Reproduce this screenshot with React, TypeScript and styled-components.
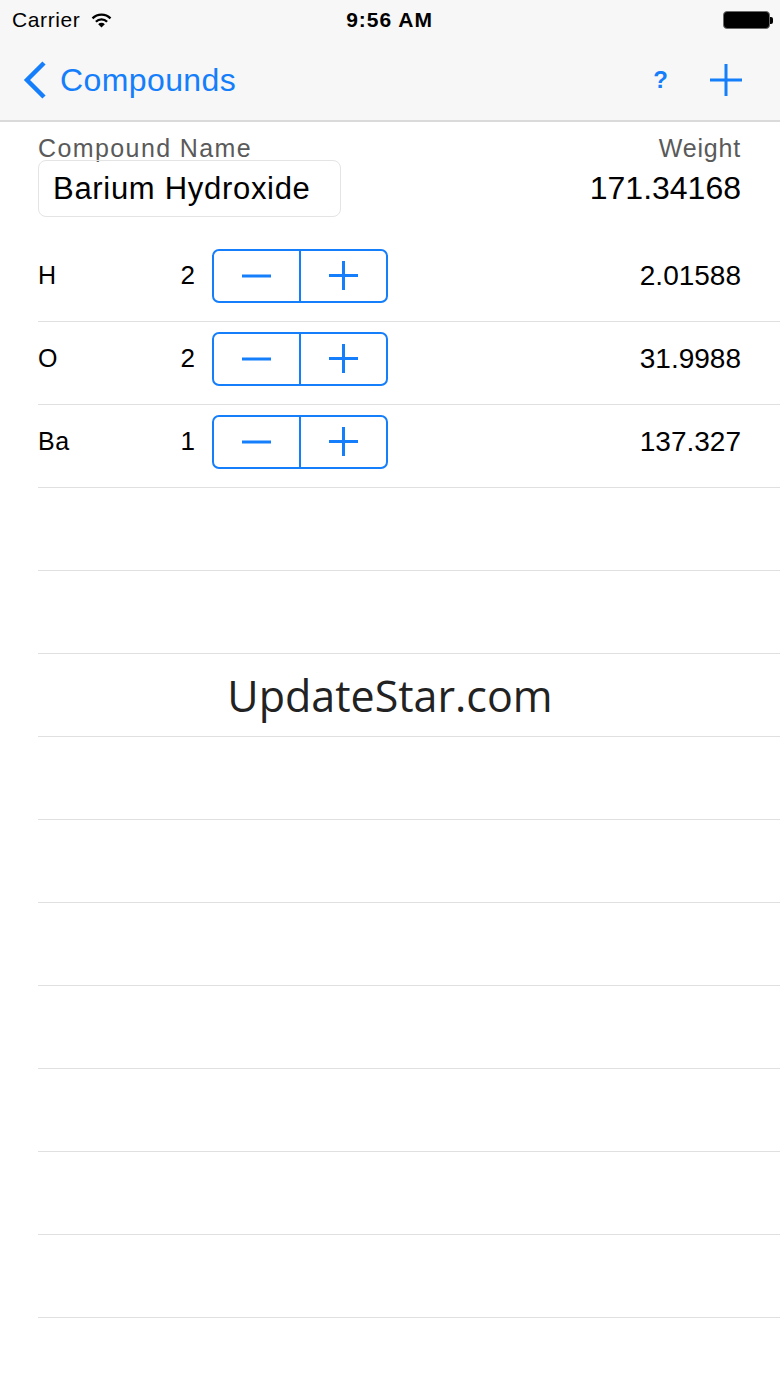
import styled, { createGlobalStyle } from 'styled-components'

const blue = '#157efb'

const GlobalStyle = createGlobalStyle`
  html, body {
    margin: 0;
    padding: 0;
    background: #ffffff;
  }
  body {
    font-family: 'Liberation Sans', Arial, sans-serif;
    color: #000000;
  }
  * {
    box-sizing: border-box;
  }
`

const Screen = styled.div`
  position: relative;
  width: 780px;
  height: 1387px;
  overflow: hidden;
  background: #ffffff;
`

const TopBar = styled.div`
  background: #f7f7f7;
  border-bottom: 2px solid #dadada;
`

const StatusBar = styled.div`
  height: 40px;
  display: grid;
  grid-template-columns: 1fr auto 1fr;
  align-items: center;
  padding: 0 7px 0 12px;
`

const Carrier = styled.div`
  display: flex;
  align-items: center;
  gap: 11px;
  font-size: 21px;
  letter-spacing: 0.6px;
`

const Clock = styled.div`
  font-weight: bold;
  font-size: 21px;
  letter-spacing: 1px;
  padding-right: 6px;
`

const Battery = styled.div`
  justify-self: end;
  display: flex;
  align-items: center;
`

const BatteryBody = styled.div`
  width: 47px;
  height: 18px;
  border-radius: 4px;
  background: #000000;
  border: 1.5px solid #6a6a6a;
`

const BatteryTip = styled.div`
  width: 3px;
  height: 7px;
  border-radius: 0 2px 2px 0;
  background: #000000;
`

const NavBar = styled.div`
  height: 80px;
  display: flex;
  align-items: center;
  padding: 0 38px 0 22px;
`

const BackButton = styled.div`
  display: flex;
  align-items: center;
  gap: 13px;
  color: ${blue};
  font-size: 32px;
  letter-spacing: 0.4px;
  flex: 1;
`

const NavActions = styled.div`
  display: flex;
  align-items: center;
  gap: 42px;
`

const HelpButton = styled.div`
  color: ${blue};
  font-size: 24px;
  font-weight: bold;
`

const Header = styled.div`
  height: 117px;
  padding: 13px 39px 0 38px;
  display: grid;
  grid-template-columns: auto 1fr;
  grid-template-rows: 25px 57px;
  align-content: start;
`

const FieldLabel = styled.div<{ $right?: boolean }>`
  font-size: 25px;
  letter-spacing: ${(p) => (p.$right ? '0.8px' : '1.4px')};
  color: #5a5a5a;
  text-align: ${(p) => (p.$right ? 'right' : 'left')};
  line-height: 26px;
`

const NameField = styled.div`
  width: 303px;
  height: 57px;
  border: 1px solid #e4e4e4;
  border-radius: 8px;
  display: flex;
  align-items: center;
  padding-left: 14px;
  font-size: 31px;
  letter-spacing: 0.7px;
`

const TotalWeight = styled.div`
  font-size: 32px;
  text-align: right;
  align-self: center;
`

const List = styled.div`
  display: flex;
  flex-direction: column;
`

const Row = styled.div`
  height: 83px;
  margin-left: 38px;
  padding: 0 39px 9px 0;
  border-bottom: 1px solid #e0e0e0;
  display: grid;
  grid-template-columns: 120px 37px 176px 1fr;
  align-items: center;
`

const Symbol = styled.div`
  font-size: 25px;
  letter-spacing: 0.5px;
`

const Count = styled.div`
  font-size: 26px;
  text-align: right;
`

const Stepper = styled.div`
  margin-left: 17px;
  width: 176px;
  height: 54px;
  border: 2px solid ${blue};
  border-radius: 7px;
  display: flex;
`

const StepButton = styled.div<{ $first?: boolean }>`
  flex: 1;
  display: flex;
  align-items: center;
  justify-content: center;
  border-right: ${(p) => (p.$first ? `2px solid ${blue}` : 'none')};
`

const Weight = styled.div`
  font-size: 28px;
  text-align: right;
`

const Watermark = styled.div`
  position: absolute;
  left: 0;
  right: 0;
  top: 666px;
  text-align: center;
  font-family: 'Open Sans', 'Noto Sans', sans-serif;
  font-size: 43px;
  color: #222222;
  pointer-events: none;
`

const WifiIcon = () => (
  <svg width="21" height="16" viewBox="0 0 21 16">
    <path d="M10.5 15.5 L7.2 12.2 A4.7 4.7 0 0 1 13.8 12.2 Z" fill="#000" />
    <path d="M4.9 9.8 A7.9 7.9 0 0 1 16.1 9.8" stroke="#000" strokeWidth="2.3" fill="none" />
    <path d="M1.5 6.4 A12.7 12.7 0 0 1 19.5 6.4" stroke="#000" strokeWidth="2.3" fill="none" />
  </svg>
)

const Chevron = () => (
  <svg width="25" height="40" viewBox="0 0 25 40">
    <path d="M22 3 L5 20 L22 37" stroke={blue} strokeWidth="4.5" fill="none" />
  </svg>
)

const PlusIcon = ({ size, weight }: { size: number; weight: number }) => (
  <svg width={size} height={size} viewBox={`0 0 ${size} ${size}`}>
    <path
      d={`M${size / 2} 0 V${size} M0 ${size / 2} H${size}`}
      stroke={blue}
      strokeWidth={weight}
    />
  </svg>
)

const MinusIcon = () => (
  <svg width="29" height="4" viewBox="0 0 29 4">
    <path d="M0 2 H29" stroke={blue} strokeWidth="3" />
  </svg>
)

const elements = [
  { symbol: 'H', count: 2, weight: '2.01588' },
  { symbol: 'O', count: 2, weight: '31.9988' },
  { symbol: 'Ba', count: 1, weight: '137.327' },
]

const App = () => {
  const emptyRows = Array.from({ length: 10 })

  return (
    <Screen>
      <GlobalStyle />
      <TopBar>
        <StatusBar>
          <Carrier>
            Carrier
            <WifiIcon />
          </Carrier>
          <Clock>9:56 AM</Clock>
          <Battery>
            <BatteryBody />
            <BatteryTip />
          </Battery>
        </StatusBar>
        <NavBar>
          <BackButton>
            <Chevron />
            Compounds
          </BackButton>
          <NavActions>
            <HelpButton>?</HelpButton>
            <PlusIcon size={32} weight={3} />
          </NavActions>
        </NavBar>
      </TopBar>

      <Header>
        <FieldLabel>Compound Name</FieldLabel>
        <FieldLabel $right>Weight</FieldLabel>
        <NameField>Barium Hydroxide</NameField>
        <TotalWeight>171.34168</TotalWeight>
      </Header>

      <List>
        {elements.map((el) => (
          <Row key={el.symbol}>
            <Symbol>{el.symbol}</Symbol>
            <Count>{el.count}</Count>
            <Stepper>
              <StepButton $first>
                <MinusIcon />
              </StepButton>
              <StepButton>
                <PlusIcon size={29} weight={3} />
              </StepButton>
            </Stepper>
            <Weight>{el.weight}</Weight>
          </Row>
        ))}
        {emptyRows.map((_, i) => (
          <Row key={i} />
        ))}
      </List>

      <Watermark>UpdateStar.com</Watermark>
    </Screen>
  )
}

export default App
